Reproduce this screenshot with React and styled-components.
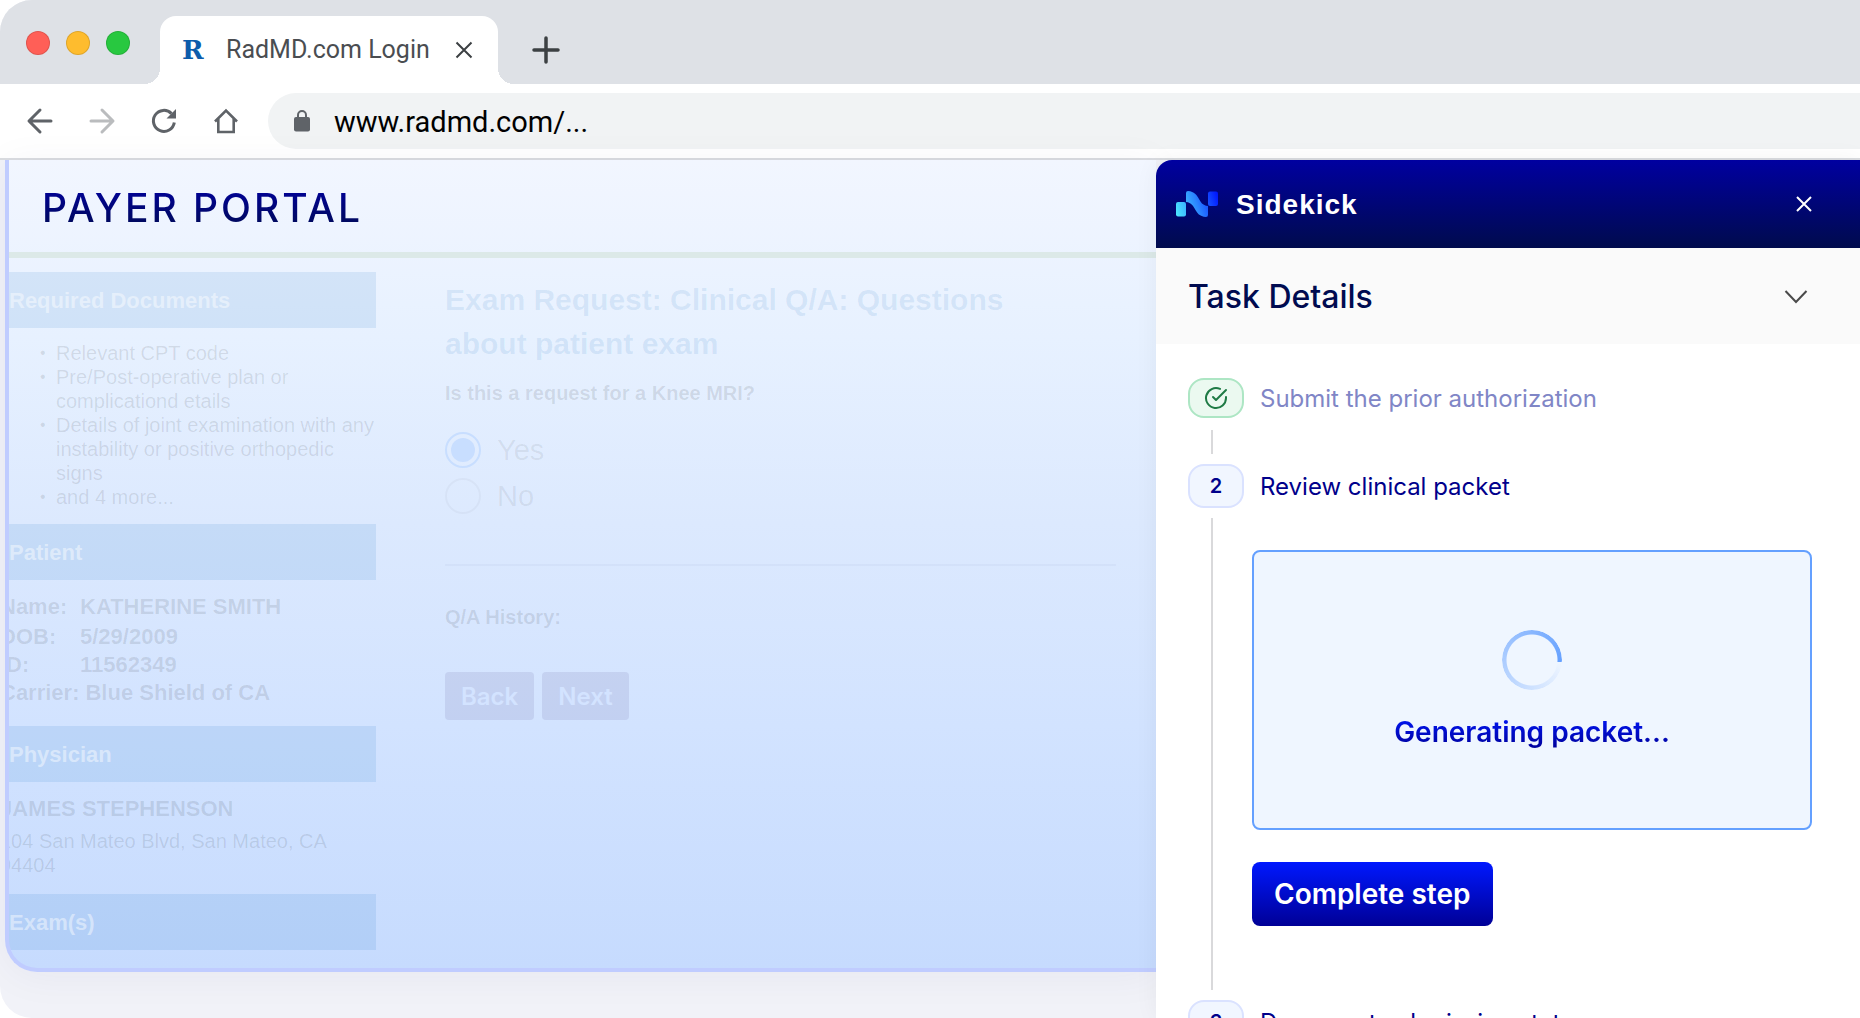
import styled, { createGlobalStyle, css } from "styled-components";


const GlobalStyle = createGlobalStyle`
   *, *::before, *::after {
      box-sizing: border-box;
   }
   body {
      margin: 0;
      background: #ffffff;
      overflow: hidden;
   }
   h1, h2, h3, p, ul, ol, dl, dd {
      margin: 0;
      padding: 0;
   }
   ul, ol {
      list-style: none;
   }
   button {
      border: 0;
      padding: 0;
      background: none;
      cursor: pointer;
   }
   svg {
      display: block;
   }
`

const portalFont = css`
   font-family: "Liberation Sans", Arial, sans-serif;
`
const panelFont = css`
   font-family: Inter, sans-serif;
`

const Browser = styled.div`
   display: flex;
   flex-direction: column;
   height: 100vh;
   overflow: hidden;
   border-radius: 32px 0 0 32px;
   background: #f1f2f8;
   font-family: Roboto, sans-serif;
`

/* browser chrome */
const TabStrip = styled.div`
   display: flex;
   align-items: flex-end;
   height: 84px;
   flex-shrink: 0;
   padding-left: 26px;
   background: #dee1e6;
`
const Lights = styled.div`
   display: flex;
   gap: 16px;
   margin: 0 30px 29px 0;
`
const Light = styled.span`
   width: 24px;
   height: 24px;
   border-radius: 50%;
   border: 1px solid rgba(0, 0, 0, 0.12);
   background: ${({ $color }) => $color};
`
const Tab = styled.div`
   position: relative;
   display: flex;
   align-items: center;
   width: 338px;
   height: 68px;
   padding: 0 24px 0 22px;
   border-radius: 16px 16px 0 0;
   background: #ffffff;
   &::before, &::after {
      content: "";
      position: absolute;
      bottom: 0;
      width: 16px;
      height: 16px;
   }
   &::before {
      left: -16px;
      background: radial-gradient(circle at 0 0, transparent 16px, #ffffff 16px);
   }
   &::after {
      right: -16px;
      background: radial-gradient(circle at 100% 0, transparent 16px, #ffffff 16px);
   }
`
const Favicon = styled.span`
   width: 24px;
   margin-right: 20px;
   font-family: "DejaVu Serif", serif;
   font-size: 26px;
   line-height: 32px;
   font-weight: bold;
   color: #0d5cab;
`
const TabTitle = styled.span`
   flex: 1;
   font-size: 25px;
   line-height: 32px;
   white-space: nowrap;
   color: #4a4d51;
`
const NewTab = styled.button`
   margin: 0 0 20px 34px;
`
const Toolbar = styled.div`
   display: flex;
   align-items: center;
   height: 76px;
   flex-shrink: 0;
   padding-left: 24px;
   border-bottom: 2px solid #dadce0;
   background: #ffffff;
`
const NavButtons = styled.div`
   display: flex;
   gap: 30px;
   margin-right: 26px;
`
const AddressBar = styled.label`
   display: flex;
   flex: 1;
   align-items: center;
   gap: 24px;
   height: 56px;
   padding-left: 26px;
   border-radius: 28px 0 0 28px;
   background: #f1f3f4;
`
const AddressInput = styled.input`
   flex: 1;
   min-width: 0;
   border: 0;
   padding: 2px 0 0;
   outline: 0;
   background: none;
   font-family: Roboto, sans-serif;
   font-size: 29px;
   color: #000000;
`

/* payer portal */
const Viewport = styled.div`
   display: flex;
   flex: 1;
   min-height: 0;
   align-items: flex-start;
   padding-left: 5px;
`
const Portal = styled.div`
   ${portalFont}
   flex: 1;
   min-width: 0;
   overflow: hidden;
   border: solid #c0ccff;
   border-width: 0 0 4px 4px;
   border-radius: 0 0 0 32px;
   background: linear-gradient(#f2f6ff, #e7f1ff 22%, #dce9fe 45%, #d2e3ff 70%, #c6dbfe);
   box-shadow: 0 4px 40px rgba(40, 30, 90, 0.05);
`
const PortalHeader = styled.header`
   padding: 24px 33px 20px;
   border-bottom: 6px solid #dce9e8;
`
const PortalTitle = styled.h1`
   ${panelFont}
   font-size: 39px;
   line-height: 48px;
   font-weight: 500;
   letter-spacing: 3px;
   white-space: nowrap;
   background: linear-gradient(#0000a0, #000b50);
   background-clip: text;
   color: transparent;
`
const PortalBody = styled.div`
   display: flex;
   gap: 69px;
   padding: 14px 40px 18px 0;
`
const PortalAside = styled.aside`
   width: 367px;
   flex-shrink: 0;
`
const SectionTitle = styled.h2`
   padding-top: 2px;
   font-size: 22px;
   line-height: 54px;
   font-weight: bold;
   background: rgba(0, 100, 190, 0.1);
   color: rgba(255, 255, 255, 0.45);
`
const Documents = styled.ul`
   padding: 13px 0 15px 31px;
   font-size: 20px;
   line-height: 24px;
   color: rgba(0, 0, 0, 0.1);
`
const DocumentItem = styled.li`
   display: flex;
   &::before {
      content: "•";
      flex: 0 0 16px;
      font-size: 16px;
   }
`
/* records run under the left edge of the portal */
const Records = styled.dl`
   margin-left: -9px;
   padding: 13px 0 19px;
   font-size: 22px;
   line-height: 28px;
   font-weight: bold;
   color: rgba(0, 0, 0, 0.1);
`
const Record = styled.div`
   display: flex;
   gap: 6px;
   &:first-child {
      padding-bottom: 2px;
   }
`
const RecordLabel = styled.dt`
   min-width: 74px;
`
const Physician = styled.div`
   margin-left: -9px;
   padding: 13px 0 17px;
   font-size: 20px;
   line-height: 24px;
   color: rgba(0, 0, 0, 0.1);
`
const PhysicianName = styled.p`
   padding-bottom: 6px;
   font-size: 22px;
   line-height: 28px;
   font-weight: bold;
`
const Exam = styled.main`
   flex: 1;
   min-width: 0;
`
const ExamTitle = styled.h2`
   max-width: 600px;
   padding-top: 6px;
   font-size: 30px;
   line-height: 44px;
   font-weight: bold;
   color: rgba(0, 100, 190, 0.1);
`
const Question = styled.h3`
   padding: 15px 0 27px;
   font-size: 20px;
   line-height: 24px;
   font-weight: bold;
   color: rgba(0, 0, 0, 0.1);
`
const History = styled(Question)`
   padding: 39px 0 43px;
`
const Choices = styled.div`
   display: flex;
   flex-direction: column;
   gap: 10px;
   padding-bottom: 50px;
   border-bottom: 2px solid rgba(0, 30, 90, 0.03);
`
const Choice = styled.label`
   display: flex;
   align-items: center;
   gap: 16px;
   font-size: 29px;
   line-height: 36px;
   color: rgba(0, 0, 0, 0.07);
`
const Radio = styled.input`
   appearance: none;
   width: 36px;
   height: 36px;
   margin: 0;
   border: 2px solid rgba(0, 0, 0, 0.03);
   border-radius: 50%;
   &:checked {
      padding: 4px;
      border-color: #c8deff;
      background: #c8deff content-box;
   }
`
const PortalActions = styled.div`
   display: flex;
   gap: 8px;
`
const PortalButton = styled.button`
   ${panelFont}
   height: 48px;
   padding: 0 16px;
   border-radius: 4px;
   background: rgba(60, 50, 120, 0.1);
   font-size: 24px;
   font-weight: 600;
   color: #d3e3ff;
`

/* sidekick panel */
const Panel = styled.section`
   ${panelFont}
   flex: 0 1 704px;
   align-self: stretch;
   overflow: hidden;
   border-top-left-radius: 16px;
   background: #ffffff;
   box-shadow: 0 0 24px rgba(0, 0, 0, 0.05);
`
const PanelHeader = styled.header`
   display: flex;
   align-items: center;
   height: 88px;
   padding: 0 48px 0 20px;
   background: linear-gradient(#0000a0, #000b4d);
`
const PanelTitle = styled.h2`
   ${portalFont}
   flex: 1;
   margin-left: 18px;
   padding-top: 2px;
   font-size: 28px;
   line-height: 36px;
   font-weight: bold;
   letter-spacing: 1px;
   color: #ffffff;
`
const DetailsBar = styled.button`
   ${panelFont}
   display: flex;
   align-items: center;
   justify-content: space-between;
   width: 100%;
   height: 96px;
   padding: 0 52px 0 32px;
   background: #fafafa;
   font-size: 32px;
   font-weight: 500;
   color: #000b50;
`
const Steps = styled.ol`
   padding: 34px 48px 0 32px;
`
const StepHead = styled.div`
   display: flex;
   align-items: center;
   gap: 16px;
   font-size: 24px;
   line-height: 32px;
   color: ${({ $done }) => ($done ? "#8086c6" : "#00008b")};
`
const StepName = styled.span`
   padding-top: 2px;
`
const Chip = styled.span`
   display: flex;
   align-items: center;
   justify-content: center;
   width: 56px;
   height: ${({ $done }) => ($done ? "40px" : "44px")};
   border: 2px solid ${({ $done }) => ($done ? "#ade6c4" : "#dae2ff")};
   border-radius: 16px;
   background: ${({ $done }) => ($done ? "#ebf9f0" : "#f1f6ff")};
   font-size: 20px;
   font-weight: 600;
   color: #00008b;
`
const StepBody = styled.div`
   min-height: 24px;
   margin: ${({ $done }) => ($done ? "12px 0 10px 23px" : "10px 0 10px 23px")};
   padding-left: 39px;
   border-left: 2px solid #d9d9db;
`
const PacketArea = styled.div`
   padding: 32px 0 64px;
`
const PacketCard = styled.div`
   display: flex;
   flex-direction: column;
   align-items: center;
   justify-content: center;
   gap: 24px;
   height: 280px;
   margin-bottom: 32px;
   border: 2px solid #64a0ff;
   border-radius: 8px;
   background: #eff6ff;
`
const Spinner = styled.div`
   width: 60px;
   height: 60px;
   border-radius: 50%;
   background: conic-gradient(from 94deg, rgba(100, 160, 255, 0), #64a0ff);
   mask: radial-gradient(circle, transparent 25px, #000 26px);
`
const PacketStatus = styled.p`
   font-size: 28px;
   line-height: 36px;
   font-weight: 600;
   background: linear-gradient(#0018ff, #000096);
   background-clip: text;
   color: transparent;
`
const CompleteButton = styled.button`
   ${panelFont}
   height: 64px;
   padding: 0 22px;
   border-radius: 8px;
   background: linear-gradient(#0018ff, #000096);
   font-size: 28px;
   font-weight: 600;
   color: #ffffff;
`

const documents = [
   "Relevant CPT code",
   "Pre/Post-operative plan or complicationd etails",
   "Details of joint examination with any instability or positive orthopedic signs",
   "and 4 more...",
];

const patient = [
   ["Name:", "KATHERINE SMITH"],
   ["DOB:", "5/29/2009"],
   ["ID:", "11562349"],
   ["Carrier:", "Blue Shield of CA"],
];

function Icon({ size, color = "#5f6368", width = 3, children, ...rest }) {
   return (
      <svg width={size} height={size} viewBox={`0 0 ${size} ${size}`} fill="none" stroke={color} strokeWidth={width} aria-hidden="true" {...rest}>
         {children}
      </svg>
   );
}

function Chrome() {
   return (
      <>
         <TabStrip>
            <Lights>
               <Light $color="#ff5f57" />
               <Light $color="#febc2e" />
               <Light $color="#28c840" />
            </Lights>
            <Tab>
               <Favicon>R</Favicon>
               <TabTitle>RadMD.com Login</TabTitle>
               <button aria-label="Close tab">
                  <Icon size={20} color="#3c4043" width={2}><path d="M2.5 2.5l15 15M17.5 2.5l-15 15" /></Icon>
               </button>
            </Tab>
            <NewTab aria-label="New tab">
               <Icon size={28} color="#3c4043" width={3.5} strokeLinecap="round"><path d="M14 2v24M2 14h24" /></Icon>
            </NewTab>
         </TabStrip>
         <Toolbar>
            <NavButtons>
               <button aria-label="Back">
                  <Icon size={32} strokeLinecap="round" strokeLinejoin="round"><path d="M27 16H6M16 5L5 16l11 11" /></Icon>
               </button>
               <button aria-label="Forward">
                  <Icon size={32} color="#babcbe" strokeLinecap="round" strokeLinejoin="round"><path d="M5 16h21M16 5l11 11-11 11" /></Icon>
               </button>
               <button aria-label="Reload">
                  <Icon size={32}>
                     <path d="M26.3 17.5A10.5 10.5 0 1 1 23.5 8.6" />
                     <path d="M28 4v9.5h-9.5z" fill="#5f6368" stroke="none" />
                  </Icon>
               </button>
               <button aria-label="Home">
                  <Icon size={32} width={2.6}>
                     <path d="M5 16.5L16 5.5l11 11" />
                     <path d="M8.3 14v13h15.4V14" />
                  </Icon>
               </button>
            </NavButtons>
            <AddressBar>
               <svg width="16" height="22" viewBox="0 0 16 22" aria-hidden="true">
                  <rect y="7" width="16" height="14.5" rx="2" fill="#5f6368" />
                  <path d="M4 8V5a4 4 0 0 1 8 0v3" fill="none" stroke="#5f6368" strokeWidth="2" />
               </svg>
               <AddressInput aria-label="Address" defaultValue="www.radmd.com/..." />
            </AddressBar>
         </Toolbar>
      </>
   );
}

function PayerPortal() {
   return (
      <Portal>
         <PortalHeader>
            <PortalTitle>PAYER PORTAL</PortalTitle>
         </PortalHeader>
         <PortalBody>
            <PortalAside>
               <SectionTitle>Required Documents</SectionTitle>
               <Documents>
                  {documents.map((text) => <DocumentItem key={text}>{text}</DocumentItem>)}
               </Documents>
               <SectionTitle>Patient</SectionTitle>
               <Records>
                  {patient.map(([label, value]) => (
                     <Record key={label}>
                        <RecordLabel>{label}</RecordLabel>
                        <dd>{value}</dd>
                     </Record>
                  ))}
               </Records>
               <SectionTitle>Physician</SectionTitle>
               <Physician>
                  <PhysicianName>JAMES STEPHENSON</PhysicianName>
                  <p>104 San Mateo Blvd, San Mateo, CA 94404</p>
               </Physician>
               <SectionTitle>Exam(s)</SectionTitle>
            </PortalAside>
            <Exam>
               <ExamTitle>Exam Request: Clinical Q/A: Questions about patient exam</ExamTitle>
               <Question>Is this a request for a Knee MRI?</Question>
               <Choices>
                  <Choice><Radio type="radio" name="knee" defaultChecked />Yes</Choice>
                  <Choice><Radio type="radio" name="knee" />No</Choice>
               </Choices>
               <History>Q/A History:</History>
               <PortalActions>
                  <PortalButton>Back</PortalButton>
                  <PortalButton>Next</PortalButton>
               </PortalActions>
            </Exam>
         </PortalBody>
      </Portal>
   );
}

function Sidekick() {
   return (
      <Panel>
         <PanelHeader>
            <svg width="42" height="26" viewBox="0 0 42 26" aria-hidden="true">
               <defs>
                  <linearGradient id="mark" gradientUnits="userSpaceOnUse" x1="0" y1="20" x2="42" y2="6">
                     <stop offset="0" stopColor="#4be3ff" />
                     <stop offset="0.5" stopColor="#2b85ff" />
                     <stop offset="1" stopColor="#0018ff" />
                  </linearGradient>
               </defs>
               <g fill="url(#mark)">
                  <rect y="11" width="10" height="14.5" rx="2" />
                  <path d="M10 2Q10 0 12 0C25 1 21 14 32 15V24Q32 26 30 26C17 25 21 12 10 11Z" />
                  <rect x="32" y="0.5" width="10" height="14.5" rx="2" />
               </g>
            </svg>
            <PanelTitle>Sidekick</PanelTitle>
            <button aria-label="Close panel">
               <Icon size={16} color="#ffffff" width={2}><path d="M1 1l14 14M15 1L1 15" /></Icon>
            </button>
         </PanelHeader>
         <DetailsBar>
            Task Details
            <Icon size={24} color="#4a4a4a" width={2}><path d="M1.5 7L12 18 22.5 7" /></Icon>
         </DetailsBar>
         <Steps>
            <li>
               <StepHead $done>
                  <Chip $done>
                     <Icon size={24} color="#1f7a45" width={2} strokeLinecap="round" strokeLinejoin="round">
                        <path d="M22 11v1a10 10 0 1 1-6-9.1" />
                        <path d="M22 4L12 14l-3-3" />
                     </Icon>
                  </Chip>
                  <StepName>Submit the prior authorization</StepName>
               </StepHead>
               <StepBody $done />
            </li>
            <li>
               <StepHead>
                  <Chip>2</Chip>
                  <StepName>Review clinical packet</StepName>
               </StepHead>
               <StepBody>
                  <PacketArea>
                     <PacketCard>
                        <Spinner />
                        <PacketStatus>Generating packet...</PacketStatus>
                     </PacketCard>
                     <CompleteButton>Complete step</CompleteButton>
                  </PacketArea>
               </StepBody>
            </li>
            <li>
               <StepHead>
                  <Chip>3</Chip>
                  <StepName>Document submission status</StepName>
               </StepHead>
            </li>
         </Steps>
      </Panel>
   );
}

export default function App() {
   return (
      <Browser>
         <GlobalStyle />
         <Chrome />
         <Viewport>
            <PayerPortal />
            <Sidekick />
         </Viewport>
      </Browser>
   );
}
